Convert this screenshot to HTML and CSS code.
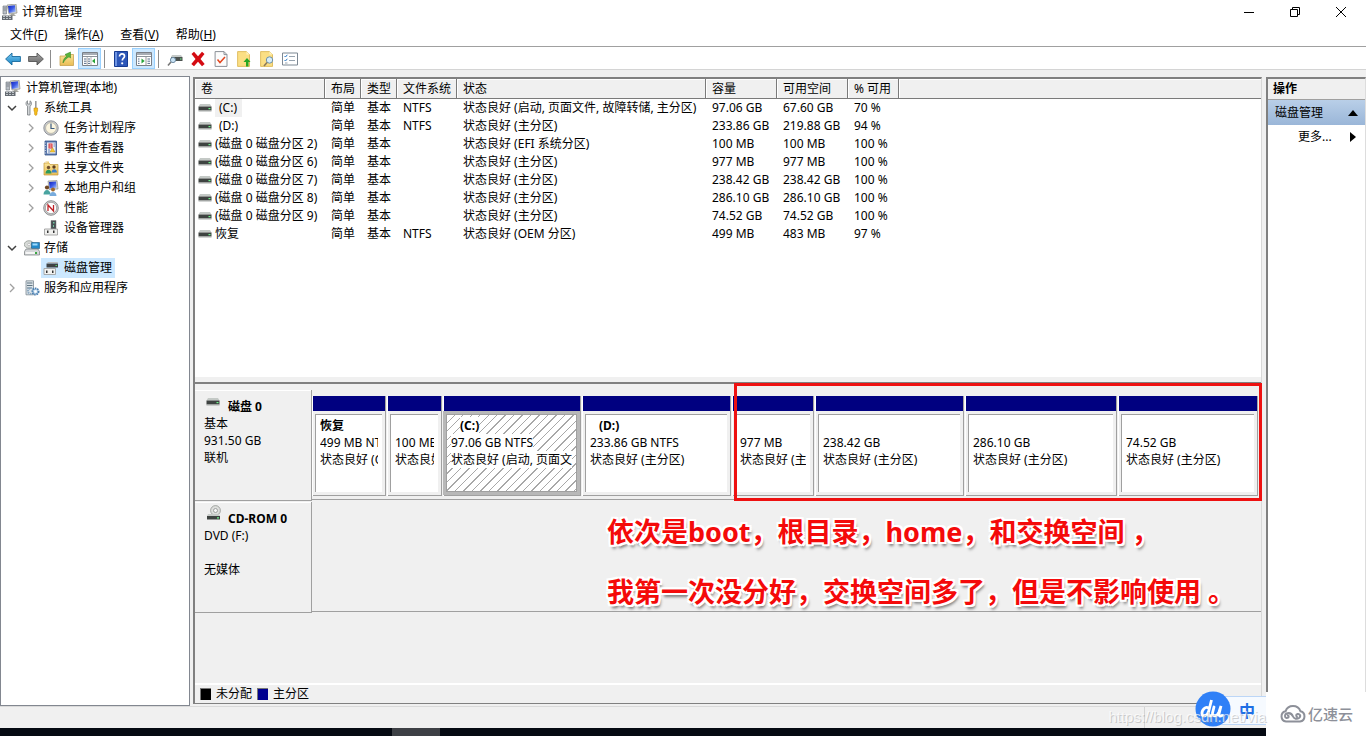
FILE: index.html
```html
<!DOCTYPE html>
<html lang="zh-CN">
<head>
<meta charset="utf-8">
<title>计算机管理</title>
<link rel="stylesheet" href="styles.css">
</head>
<body>
<svg class="defs" aria-hidden="true">
  <defs>
    <linearGradient id="g-blue" x1="0" y1="0" x2="0" y2="1"><stop offset="0" stop-color="#7cc8f0"/><stop offset="1" stop-color="#1583c4"/></linearGradient>
    <linearGradient id="g-gray" x1="0" y1="0" x2="0" y2="1"><stop offset="0" stop-color="#a5a5a5"/><stop offset="1" stop-color="#666"/></linearGradient>
    <linearGradient id="g-screen" x1="0" y1="0" x2="1" y2="1"><stop offset="0" stop-color="#1222b8"/><stop offset=".5" stop-color="#3c5be6"/><stop offset="1" stop-color="#b8d0fa"/></linearGradient>
    <linearGradient id="g-fold" x1="0" y1="0" x2="0" y2="1"><stop offset="0" stop-color="#fbe49a"/><stop offset="1" stop-color="#e9bd55"/></linearGradient>
    <symbol id="i-computer" viewBox="0 0 16 16"><path d="M5 1l9-1 1 9-8 1z" fill="#d8d8cc" stroke="#8c8c88" stroke-width=".7"/><path d="M6 2l7-.8.7 6.8-6.7.9z" fill="url(#g-screen)"/><path d="M1 2h3.500v8H1z" fill="#b9bfc6" stroke="#6d7379" stroke-width=".6"/><path d="M1.500 4h2.500M1.500 6h2.500" stroke="#5a6068" stroke-width=".6"/><path d="M9 10h3l2 2H8z" fill="#a8a8a0"/><path d="M0 11.500h10.500V16H0z" fill="#656b72"/><path d="M1 12.500h8.500M1 14.500h8.500" stroke="#d7dce0" stroke-width=".8" stroke-dasharray="2 1"/></symbol>
    <symbol id="i-tools" viewBox="0 0 16 16"><path d="M3.500.8C1.500 2 1.500 5 3.500 6.200V15h2.500V6.200C8 5 8 2 6 .8V4H3.500z" fill="#d3d6d8" stroke="#777c80" stroke-width=".8"/><path d="M11 1h1.600v8H11z" fill="#9a9a9a"/><path d="M10 8h3.600v3L13 12v2.500l-1.200 1-1.200-1V12L10 11z" fill="#f6be1c" stroke="#c98c06" stroke-width=".6"/></symbol>
    <symbol id="i-clock" viewBox="0 0 16 16"><circle cx="8" cy="8" r="7.200" fill="#c9ccd0" stroke="#7b7e83" stroke-width=".8"/><circle cx="8" cy="8" r="5.400" fill="#fbf5df" stroke="#a5a190" stroke-width=".6"/><path d="M8 3.500V8.500h3.500" fill="none" stroke="#3b5a80" stroke-width="1.200"/></symbol>
    <symbol id="i-event" viewBox="0 0 16 16"><path d="M2 1h11.500v14H2z" fill="#5c79ad" stroke="#36558d" stroke-width=".8"/><path d="M4 2.500h8.500v11H4z" fill="#e8edf5"/><path d="M5.500 3.500h4v5h-4z" fill="#d9363a"/><path d="M6.500 5h2M6.500 7h2" stroke="#fff" stroke-width=".8"/><path d="M9.500 7.500l2.500 4.500H7z" fill="#fbcb32" stroke="#a67c12" stroke-width=".4"/><path d="M5 10h2M5 12h2M10.500 4h1.500M10.500 6h1.500" stroke="#4e71a8" stroke-width=".8"/><path d="M1 3h2M1 5.500h2M1 8h2M1 10.500h2M1 13h2" stroke="#bcc7d8"/></symbol>
    <symbol id="i-shared" viewBox="0 0 16 16"><path d="M1 3h5l1 1.500h8V15H1z" fill="url(#g-fold)" stroke="#c39a3b" stroke-width=".7"/><path d="M2 1.500h4v2" fill="#efcc70"/><circle cx="5.500" cy="7.500" r="1.700" fill="#705030"/><path d="M2.500 13.500c0-5 6-5 6 0z" fill="#2d9a5c"/><circle cx="11" cy="7" r="1.700" fill="#5c3d22"/><path d="M8.500 12.500c0-4.500 5.500-4.500 5.500 0z" fill="#3e81ca"/></symbol>
    <symbol id="i-users" viewBox="0 0 16 16"><path d="M5 1l9-.5 1 8.500-9 .5z" fill="#d2d4cf" stroke="#848684" stroke-width=".6"/><path d="M6 2l7-.4.700 6.200-7 .6z" fill="url(#g-screen)"/><circle cx="4" cy="7.500" r="2.100" fill="#6f4824"/><path d="M.5 14.500c0-6 7-6 7 0z" fill="#49a4a0"/><circle cx="10" cy="9.500" r="2" fill="#a0682b"/><path d="M6.500 16c0-5.500 7-5.500 7 0z" fill="#78abdc"/></symbol>
    <symbol id="i-perf" viewBox="0 0 16 16"><circle cx="8" cy="8" r="7.300" fill="#d0d1d1" stroke="#77797b" stroke-width=".8"/><circle cx="8" cy="8" r="5.700" fill="#fff" stroke="#8e8e8e" stroke-width=".7"/><path d="M5 11V5l5.500 6V5" fill="none" stroke="#bf2227" stroke-width="1.300"/></symbol>
    <symbol id="i-device" viewBox="0 0 16 16"><path d="M8 .5h5V9H8z" fill="#4a5054" stroke="#777" stroke-width=".5"/><path d="M10 2h1.500v1.500H10zM10 5h1v2h-1z" fill="#6fc59e"/><path d="M1.500 9h13v6h-13z" fill="#f0f0ee" stroke="#969696" stroke-width=".8"/><path d="M4 10.500h1.500V13H4zM10 10.500h1.500V13H10z" fill="#333"/></symbol>
    <symbol id="i-storage" viewBox="0 0 16 16"><ellipse cx="5" cy="4.500" rx="4.700" ry="3.800" fill="#d7dad7" stroke="#8a908b" stroke-width=".7"/><circle cx="5" cy="4.500" r="1.300" fill="#fff" stroke="#949494" stroke-width=".5"/><path d="M7.500 2.500h8v6h-8z" fill="#2389c9" stroke="#175780" stroke-width=".6"/><path d="M8.500 3.500h5v2h-5z" fill="#9ddafd"/><path d="M2 9h12l1.500 2.500v3.500H.5v-3.500z" fill="#d5d7d9" stroke="#74787b" stroke-width=".7"/><path d="M1.500 12h11v2h-11z" fill="#f5f5f5"/><path d="M11 12h2v2h-2z" fill="#3aa742"/></symbol>
    <symbol id="i-diskmgmt" viewBox="0 0 16 16"><path d="M3.500 3.500h11.500v4H3.500z" fill="#3f4244"/><path d="M4 3l1-1h9.500l.5 1z" fill="#bbb"/><path d="M12.500 5.500h1.500" stroke="#51d568"/><path d="M1 8.500h11.500v6H1z" fill="#f2f2f0" stroke="#999" stroke-width=".8"/><path d="M3 10.500h1.500V13H3zM9 10.500h1.500V13H9z" fill="#333"/></symbol>
    <symbol id="i-services" viewBox="0 0 16 16"><path d="M2 .8h7.500v14H2z" fill="#dbe3e8" stroke="#7c8992" stroke-width=".8"/><path d="M3 3h5.500M3 5.500h5.500M3 8h4" stroke="#607481"/><circle cx="7" cy="11" r="3" fill="none" stroke="#8ba8c0" stroke-width="2" stroke-dasharray="1.500 .7"/><circle cx="11.500" cy="11.500" r="3" fill="#c9dff1" stroke="#4c80b1" stroke-width="2" stroke-dasharray="1.500 .7"/><circle cx="11.500" cy="11.500" r="1.200" fill="#fff"/></symbol>
    <symbol id="i-drive" viewBox="0 0 14 8"><path d="M2 0h10l1.500 2.500H.5z" fill="#c4c9c6"/><path d="M.5 2.500h13v4H.5z" fill="#3e4341"/><path d="M.5 6.500h13v1H.5z" fill="#a6aaa8"/><path d="M10.500 4h2v1.200h-2z" fill="#6ff58c"/></symbol>
    <symbol id="i-cdrom" viewBox="0 0 16 16"><circle cx="9.500" cy="5.500" r="4.900" fill="#dedfdd" stroke="#929592" stroke-width=".8"/><circle cx="9.500" cy="5.500" r="2" fill="#f8f8f8" stroke="#8e918f" stroke-width=".8"/><path d="M2 9h11l1 2H1z" fill="#c7cac8"/><path d="M1 11h13v3.500H1z" fill="#3e4341"/><path d="M11 12.200h2v1.200h-2z" fill="#6ff58c"/></symbol>
    <symbol id="t-back" viewBox="0 0 16 16"><path d="M.6 8l6.400-6v3.500h8.400v5H7V14z" fill="url(#g-blue)" stroke="#176a9d" stroke-width=".9"/></symbol>
    <symbol id="t-next" viewBox="0 0 16 16"><path d="M15.400 8L9 2v3.500H.6v5H9V14z" fill="url(#g-gray)" stroke="#555" stroke-width=".9"/></symbol>
    <symbol id="t-up" viewBox="0 0 16 16"><path d="M1 5h5l1-1.500h7.500V14.500H1z" fill="url(#g-fold)" stroke="#c19a43" stroke-width=".7"/><path d="M4 12c0-3 1.500-5.500 4-7L6 3.500 11.500 1 11.500 7 10 5.800C7.500 7 5.500 9.500 4 12z" fill="#57b43c" stroke="#2c811e" stroke-width=".5"/></symbol>
    <symbol id="t-tree" viewBox="0 0 16 16"><path d="M.5 1.500h15v13H.5z" fill="#fff" stroke="#7a8088"/><path d="M1 2h14v2H1z" fill="#a7adb5"/><path d="M1 5.500h14" stroke="#8c939b"/><path d="M2 8h2.500M2 10.200h2.500M2 12.400h2.500M6 8h2M6 10.200h2M6 12.400h2" stroke="#586e8b"/><path d="M5.200 6v8.500M9 6v8.500" stroke="#999" stroke-width=".7"/><path d="M13 7.500v5L10 10z" fill="#26a438"/></symbol>
    <symbol id="t-help" viewBox="0 0 14 16"><path d="M.5.5h13v15H.5z" fill="#2c56b8" stroke="#163b92"/><path d="M1 1h2v14H1z" fill="#6d93e1"/><path d="M5.500 5.500c0-3.600 5-3.200 5-.3 0 2-2.200 2-2.200 4.300" fill="none" stroke="#fff" stroke-width="1.700"/><circle cx="8.200" cy="12.300" r="1.100" fill="#fff"/></symbol>
    <symbol id="t-pane" viewBox="0 0 16 16"><path d="M.5 1.500h15v13H.5z" fill="#fff" stroke="#7a8088"/><path d="M1 2h14v2H1z" fill="#a7adb5"/><path d="M1 5.500h14" stroke="#8c939b"/><path d="M2 8h1.500M2 10.200h1.500M2 12.400h1.500M11.500 8h2.500M11.500 10.200h2.500M11.500 12.400h2.500" stroke="#586e8b"/><path d="M10 6v8.500" stroke="#999"/><path d="M5.500 7.500v5l3.200-2.500z" fill="#26a438"/></symbol>
    <symbol id="t-scan" viewBox="0 0 16 16"><path d="M5 4h9l1.500 2H4z" fill="#c5cac8"/><path d="M4 6h11.500v4H4z" fill="#4b514e"/><path d="M13 7.500h1.500v1H13z" fill="#6ff58c"/><circle cx="6" cy="9" r="2.600" fill="#c9e3f5" stroke="#708ca3"/><path d="M4 11l-3 3.500" stroke="#777" stroke-width="1.600"/></symbol>
    <symbol id="t-del" viewBox="0 0 14 16"><path d="M.5 3L3 .8 7 5.200 11 .8 13.500 3 9.500 8l4.200 5-2.700 2.200L7 10.800 3 15.200.3 13 4.500 8z" fill="#d40b12"/></symbol>
    <symbol id="t-check" viewBox="0 0 13 16"><path d="M.6.6h8.900l3 3v11.800H.6z" fill="#fcfcfc" stroke="#8b9097"/><path d="M9.500.6v3h3" fill="none" stroke="#8b9097"/><path d="M3 8.500l2.500 3L10.500 6" fill="none" stroke="#e4461e" stroke-width="1.500"/></symbol>
    <symbol id="t-doc-up" viewBox="0 0 14 16"><path d="M.6.6h8.900l3 3v11.800H.6z" fill="#fbdf84" stroke="#d9b24b" stroke-width=".8"/><path d="M9.500.6v3h3" fill="#fff3c0"/><path d="M9 15.500V11H6.500L10 7l3.500 4H11.500v4.500z" fill="#28a723"/></symbol>
    <symbol id="t-doc-find" viewBox="0 0 14 16"><path d="M.6.6h8.900l3 3v11.800H.6z" fill="#fbdf84" stroke="#d9b24b" stroke-width=".8"/><path d="M9.500.6v3h3" fill="#fff3c0"/><circle cx="9.500" cy="9" r="3.200" fill="#d7edf8" stroke="#6f91a6"/><path d="M7 11.500l-3 3.500" stroke="#8b795a" stroke-width="1.600"/></symbol>
    <symbol id="t-list" viewBox="0 0 16 14"><path d="M.5 1h15v12H.5z" fill="#fff" stroke="#7d8893"/><path d="M2.500 4l1 1 1.800-2.200M2.500 8l1 1 1.800-2.200" fill="none" stroke="#2d7ac6"/><path d="M7 4.500h6M7 8.500h6M3 11h2.500" stroke="#98a4af"/></symbol>
    <symbol id="i-open" viewBox="0 0 10 10"><path d="M1 3l4 4 4-4" fill="none" stroke="#404040" stroke-width="1.500"/></symbol>
    <symbol id="i-closed" viewBox="0 0 10 10"><path d="M3 1l4 4-4 4" fill="none" stroke="#a0a0a0" stroke-width="1.300"/></symbol>
  </defs>
</svg>

<header class="titlebar">
  <svg class="icon"><use href="#i-computer"/></svg>
  <h1 class="title">计算机管理</h1>
  <div class="window-buttons">
    <button aria-label="最小化"><svg viewBox="0 0 12 12"><path d="M1 6.500h10"/></svg></button>
    <button aria-label="还原"><svg viewBox="0 0 12 12"><path d="M1.500 3.500h7v7h-7zM3.500 3.500v-2h7v7h-2"/></svg></button>
    <button aria-label="关闭"><svg viewBox="0 0 12 12"><path d="M1 1l10 10M11 1L1 11"/></svg></button>
  </div>
</header>

<nav class="menubar">
  <button>文件(<u>F</u>)</button>
  <button>操作(<u>A</u>)</button>
  <button>查看(<u>V</u>)</button>
  <button>帮助(<u>H</u>)</button>
</nav>

<div class="toolbar" role="toolbar">
  <button aria-label="后退"><svg><use href="#t-back"/></svg></button>
  <button aria-label="前进"><svg><use href="#t-next"/></svg></button>
  <span class="sep"></span>
  <button aria-label="向上"><svg><use href="#t-up"/></svg></button>
  <button class="pressed" aria-label="显示控制台树"><svg><use href="#t-tree"/></svg></button>
  <span class="sep"></span>
  <button aria-label="帮助"><svg><use href="#t-help"/></svg></button>
  <button class="pressed" aria-label="显示操作窗格"><svg><use href="#t-pane"/></svg></button>
  <span class="sep"></span>
  <button aria-label="重新扫描"><svg><use href="#t-scan"/></svg></button>
  <button aria-label="删除"><svg><use href="#t-del"/></svg></button>
  <button aria-label="属性"><svg><use href="#t-check"/></svg></button>
  <button aria-label="打开"><svg><use href="#t-doc-up"/></svg></button>
  <button aria-label="浏览"><svg><use href="#t-doc-find"/></svg></button>
  <button aria-label="选项"><svg><use href="#t-list"/></svg></button>
</div>

<main class="workspace">
  <nav class="tree">
    <ul>
      <li class="root"><svg class="icon"><use href="#i-computer"/></svg><span>计算机管理(本地)</span></li>
      <li class="l1"><button aria-label="折叠"><svg><use href="#i-open"/></svg></button><svg class="icon"><use href="#i-tools"/></svg><span>系统工具</span></li>
      <li class="l2"><button aria-label="展开"><svg><use href="#i-closed"/></svg></button><svg class="icon"><use href="#i-clock"/></svg><span>任务计划程序</span></li>
      <li class="l2"><button aria-label="展开"><svg><use href="#i-closed"/></svg></button><svg class="icon"><use href="#i-event"/></svg><span>事件查看器</span></li>
      <li class="l2"><button aria-label="展开"><svg><use href="#i-closed"/></svg></button><svg class="icon"><use href="#i-shared"/></svg><span>共享文件夹</span></li>
      <li class="l2"><button aria-label="展开"><svg><use href="#i-closed"/></svg></button><svg class="icon"><use href="#i-users"/></svg><span>本地用户和组</span></li>
      <li class="l2"><button aria-label="展开"><svg><use href="#i-closed"/></svg></button><svg class="icon"><use href="#i-perf"/></svg><span>性能</span></li>
      <li class="l2 leaf"><div class="item"><svg class="icon"><use href="#i-device"/></svg><span>设备管理器</span></div></li>
      <li class="l1"><button aria-label="折叠"><svg><use href="#i-open"/></svg></button><svg class="icon"><use href="#i-storage"/></svg><span>存储</span></li>
      <li class="l2 leaf"><div class="item selected"><svg class="icon"><use href="#i-diskmgmt"/></svg><span>磁盘管理</span></div></li>
      <li class="l1"><button aria-label="展开"><svg><use href="#i-closed"/></svg></button><svg class="icon"><use href="#i-services"/></svg><span>服务和应用程序</span></li>
    </ul>
  </nav>

  <section class="center">
    <div class="volumes">
      <table>
        <colgroup><col class="c-vol"><col class="c-short"><col class="c-short"><col class="c-fs"><col class="c-state"><col class="c-size"><col class="c-size"><col class="c-pct"><col></colgroup>
        <thead><tr><th>卷</th><th>布局</th><th>类型</th><th>文件系统</th><th>状态</th><th>容量</th><th>可用空间</th><th>% 可用</th><th></th></tr></thead>
        <tbody>
          <tr><td class="vol"><svg class="drive"><use href="#i-drive"/></svg><span class="letter focus">(C:)</span></td><td>简单</td><td>基本</td><td>NTFS</td><td>状态良好 (启动, 页面文件, 故障转储, 主分区)</td><td>97.06 GB</td><td>67.60 GB</td><td>70 %</td><td></td></tr>
          <tr><td class="vol"><svg class="drive"><use href="#i-drive"/></svg><span class="letter">(D:)</span></td><td>简单</td><td>基本</td><td>NTFS</td><td>状态良好 (主分区)</td><td>233.86 GB</td><td>219.88 GB</td><td>94 %</td><td></td></tr>
          <tr><td class="vol"><svg class="drive"><use href="#i-drive"/></svg>(磁盘 0 磁盘分区 2)</td><td>简单</td><td>基本</td><td></td><td>状态良好 (EFI 系统分区)</td><td>100 MB</td><td>100 MB</td><td>100 %</td><td></td></tr>
          <tr><td class="vol"><svg class="drive"><use href="#i-drive"/></svg>(磁盘 0 磁盘分区 6)</td><td>简单</td><td>基本</td><td></td><td>状态良好 (主分区)</td><td>977 MB</td><td>977 MB</td><td>100 %</td><td></td></tr>
          <tr><td class="vol"><svg class="drive"><use href="#i-drive"/></svg>(磁盘 0 磁盘分区 7)</td><td>简单</td><td>基本</td><td></td><td>状态良好 (主分区)</td><td>238.42 GB</td><td>238.42 GB</td><td>100 %</td><td></td></tr>
          <tr><td class="vol"><svg class="drive"><use href="#i-drive"/></svg>(磁盘 0 磁盘分区 8)</td><td>简单</td><td>基本</td><td></td><td>状态良好 (主分区)</td><td>286.10 GB</td><td>286.10 GB</td><td>100 %</td><td></td></tr>
          <tr><td class="vol"><svg class="drive"><use href="#i-drive"/></svg>(磁盘 0 磁盘分区 9)</td><td>简单</td><td>基本</td><td></td><td>状态良好 (主分区)</td><td>74.52 GB</td><td>74.52 GB</td><td>100 %</td><td></td></tr>
          <tr><td class="vol"><svg class="drive"><use href="#i-drive"/></svg>恢复</td><td>简单</td><td>基本</td><td>NTFS</td><td>状态良好 (OEM 分区)</td><td>499 MB</td><td>483 MB</td><td>97 %</td><td></td></tr>
        </tbody>
      </table>
    </div>
    <div class="splitter"></div>
    <div class="disks">
      <div class="disk">
        <div class="disk-label">
          <div class="disk-name"><svg class="drive"><use href="#i-drive"/></svg><b>磁盘 0</b></div>
          <p>基本</p><p>931.50 GB</p><p>联机</p>
        </div>
        <div class="disk-body">
          <div class="partitions">
            <div class="partition" style="flex-grow:67"><div class="box"><b>恢复</b><p>499 MB NTFS</p><p>状态良好 (OEM 分区)</p></div></div>
            <div class="partition" style="flex-grow:48"><div class="box"><b></b><p>100 MB</p><p>状态良好 (EFI 系统分区)</p></div></div>
            <div class="partition current" style="flex-grow:131"><div class="box"><b class="letter"><span>(C:)</span></b><p><span>97.06 GB NTFS</span></p><p><span>状态良好 (启动, 页面文件, 故障转储, 主分区)</span></p></div></div>
            <div class="partition" style="flex-grow:142"><div class="box"><b class="letter">(D:)</b><p>233.86 GB NTFS</p><p>状态良好 (主分区)</p></div></div>
            <div class="partition" style="flex-grow:75"><div class="box"><b></b><p>977 MB</p><p>状态良好 (主分区)</p></div></div>
            <div class="partition" style="flex-grow:142"><div class="box"><b></b><p>238.42 GB</p><p>状态良好 (主分区)</p></div></div>
            <div class="partition" style="flex-grow:145"><div class="box"><b></b><p>286.10 GB</p><p>状态良好 (主分区)</p></div></div>
            <div class="partition" style="flex-grow:133"><div class="box"><b></b><p>74.52 GB</p><p>状态良好 (主分区)</p></div></div>
            <div class="mark"></div>
          </div>
        </div>
      </div>
      <div class="disk">
        <div class="disk-label">
          <div class="disk-name"><svg class="cdrom"><use href="#i-cdrom"/></svg><b>CD-ROM 0</b></div>
          <p>DVD (F:)</p><p></p><p>无媒体</p>
        </div>
        <div class="disk-body">
          <div class="note"><p>依次是boot，根目录，home，和交换空间 ，</p><p>我第一次没分好，交换空间多了，但是不影响使用 。</p></div>
        </div>
      </div>
    </div>
    <div class="legend">
      <span class="swatch free"></span><span>未分配</span>
      <span class="swatch primary"></span><span>主分区</span>
    </div>
  </section>

  <aside class="actions">
    <h2>操作</h2>
    <button class="group">磁盘管理<svg viewBox="0 0 10 6"><path d="M0 6l5-6 5 6z"/></svg></button>
    <button class="more">更多...<svg class="right" viewBox="0 0 6 10"><path d="M0 0l6 5-6 5z"/></svg></button>
  </aside>
</main>

<footer class="statusbar"><span class="status-cell"></span></footer>
<div class="taskbar"><span class="task"></span></div>

<div class="brand">
  <svg viewBox="0 0 26 18"><path d="M6 16.500h14a5.200 5.200 0 0 0 .5-10.200A8 8 0 0 0 5.500 6.300 5.200 5.200 0 0 0 6 16.500zM6.500 8.500c3-1 5.500.5 6.500 3s4 3 6 1.500c2.500-2 .5-4.500-1.500-4s-1.500 3 .3 3M6.500 8.500c-2 1-2 4 0 4.500 2.500.5 3-3 .5-2.500"/></svg>
  <span>亿速云</span>
</div>
<div class="ime">
  <span class="mode">中</span>
  <svg viewBox="0 0 36 36"><circle cx="18" cy="18" r="17.500" fill="#2f80f7"/><path d="M13.500 17c-3-2-7 2-6.500 6 .5 3.500 5 2 6.500-2l3-12-3 12c-.5 4 1 4.500 3 3.500M19 16l-1.500 6c-.5 4 4.500 4 6.500-1l2-6-2 8c0 2 1 2.500 3 1.500" fill="none" stroke="#fff" stroke-width="2.800" stroke-linecap="round"/></svg>
</div>
<div class="watermark">https://blog.csdn.net/via</div>
</body>
</html>
```

FILE: styles.css
```css
* { box-sizing: border-box; }

body {
  margin: 0;
  height: 100vh;
  display: flex;
  flex-direction: column;
  position: relative;
  overflow: hidden;
  background: #f0f0f0;
  color: #000;
  font: 12px/18px "Noto Sans", "Noto Sans CJK SC", sans-serif;
}

button {
  border: 0;
  padding: 0;
  background: none;
  color: inherit;
  font: inherit;
}

h1, h2, p, ul { margin: 0; padding: 0; }
ul { list-style: none; }
.defs { position: absolute; width: 0; height: 0; }
.icon { width: 16px; height: 16px; flex: none; }

.titlebar {
  height: 23px;
  flex: none;
  display: flex;
  align-items: center;
  gap: 4px;
  padding: 0 2px;
  background: #fff;
}
.title { font-size: 12px; font-weight: 400; }
.window-buttons { display: flex; margin-left: auto; }
.window-buttons button { width: 46px; height: 22px; display: grid; place-items: center; }
.window-buttons button svg { width: 12px; height: 12px; fill: none; stroke: #000; }

.menubar {
  height: 24px;
  flex: none;
  display: flex;
  align-items: center;
  gap: 17px;
  padding-left: 10px;
  background: #fff;
  border-bottom: 1px solid #a0a0a0;
}

.toolbar {
  height: 23px;
  flex: none;
  display: flex;
  align-items: center;
  padding: 1px 0 0 1px;
  background: #fff;
  border-bottom: 1px solid #d4d4d4;
}
.toolbar button { width: 23px; height: 21px; display: grid; place-items: center; }
.toolbar svg { width: 16px; height: 16px; }
.toolbar .pressed { background: #cce8ff; border: 1px solid #99d1ff; }
.toolbar .sep { width: 1px; height: 18px; margin: 0 4px 0 3px; background: #8d8d8d; }

.workspace { flex: 1; min-height: 0; display: flex; padding-top: 6px; }

.tree {
  width: 190px;
  flex: none;
  background: #fff;
  border: 1px solid #828790;
}
.tree ul { padding-top: 1px; }
.tree li { display: flex; align-items: center; height: 20px; white-space: nowrap; }
.tree li.root { padding-left: 4px; gap: 5px; }
.tree li.l1 { padding-left: 6px; gap: 4px; }
.tree li.l2 { padding-left: 25px; gap: 5px; }
.tree li.leaf { padding-left: 40px; }
.tree .item { display: flex; align-items: center; gap: 5px; height: 20px; padding: 0 3px 0 2px; }
.tree .selected { background: #cce8ff; }
.tree button { width: 10px; height: 10px; margin-right: 2px; display: grid; flex: none; }
.tree li.l1 button { margin-right: 3px; }
.tree button svg { width: 10px; height: 10px; }

.center {
  flex: 1;
  min-width: 0;
  display: flex;
  flex-direction: column;
  margin: 1px 4px 2px 3px;
  border: solid #808080;
  border-width: 2px 1px 1px 2px;
  border-right-color: #d8d8d8;
}
.volumes { flex: 298 1 0; min-height: 0; background: #fff; overflow: hidden; }
.volumes table { width: 100%; table-layout: fixed; border-collapse: separate; border-spacing: 0; }
.c-vol { width: 130px; }
.c-short { width: 36px; }
.c-fs { width: 60px; }
.c-state { width: 249px; }
.c-size { width: 71px; }
.c-pct { width: 51px; }
.volumes th {
  height: 20px;
  padding: 0 0 0 6px;
  background: #f0f0f0;
  border: solid #7a7a7a;
  border-width: 0 1px 1px 0;
  box-shadow: inset 1px 1px #fff;
  font-weight: 400;
  text-align: left;
  white-space: nowrap;
}
.volumes th:last-child { border-right: 0; }
.volumes td { height: 18px; padding: 0 0 0 6px; line-height: 18px; white-space: nowrap; }
.volumes td.vol { padding-left: 3px; }
.drive { width: 14px; height: 8px; }
.vol .drive { margin-right: 3px; }
.letter { display: inline-block; padding: 0 5px 0 4px; }
.focus { background: #f0f0f0; }

.splitter { height: 8px; flex: none; border-top: 1px solid #fff; border-bottom: 2px solid #808080; }

.disks { flex: 294 1 0; min-height: 0; padding-top: 6px; }
.disk { display: flex; height: 112px; }
.disk-label {
  width: 117px;
  flex: none;
  height: 111px;
  padding: 8px 9px;
  border: solid #a0a0a0;
  border-width: 0 1px 1px 0;
  box-shadow: inset 0 1px #fff;
}
.disk-label p, .partition p, .partition b { display: block; height: 17px; line-height: 17px; white-space: nowrap; }
.disk-name { display: flex; height: 17px; gap: 8px; padding-left: 2px; line-height: 17px; white-space: nowrap; }
.disk-name .cdrom { width: 16px; height: 16px; margin: -5px -2px 0 0; flex: none; }
.disk-body {
  flex: 1;
  min-width: 0;
  height: 110px;
  position: relative;
  padding: 6px 4px 3px 1px;
  border-bottom: 1px solid #a0a0a0;
}
.partitions { display: flex; gap: 3px; height: 100%; position: relative; }
.partition {
  flex: 1 1 0;
  min-width: 0;
  padding: 18px 3px 3px 2px;
  background: linear-gradient(#000080, #000080) top / 100% 15px no-repeat;
  border-bottom: 1px solid #a0a0a0;
  box-shadow: 1px 0 #a0a0a0, -1px 0 #fff;
}
.box {
  height: 100%;
  padding: 2px 4px;
  overflow: hidden;
  background: #fff;
  border: solid #a0a0a0;
  border-width: 1px 0 0 1px;
}
.box p { overflow: hidden; }
.partition b.letter { padding-left: 9px; }
.current .box {
  background: repeating-linear-gradient(135deg, #fff 0, #fff 5px, #a8a8a8 5px, #a8a8a8 6px);
  border-width: 1px;
  outline: 3px solid #b8b8b8;
}
.current .box span { background: #fff; }

.mark {
  position: absolute;
  top: -13px;
  bottom: -5px;
  left: 44.600%;
  right: -5px;
  border: 3px solid #ee1111;
}
.note {
  position: absolute;
  top: 0;
  left: 295px;
  color: #f40a0a;
  font-size: 27px;
  font-weight: 700;
  line-height: 60px;
  white-space: nowrap;
  text-shadow: 2px 0 #fff, -2px 0 #fff, 0 2px #fff, 0 -2px #fff, 2px 2px #fff, -2px -2px #fff, 2px -2px #fff, -2px 2px #fff, 2px 4px 3px #777;
}

.legend {
  height: 20px;
  flex: none;
  display: flex;
  align-items: center;
  gap: 5px;
  padding-left: 5px;
  border-top: 2px solid #fff;
}
.swatch { width: 11px; height: 12px; border: 1px solid #777; border-width: 1px 0 0 1px; }
.free { background: #000; }
.primary { background: #000090; }

.actions {
  width: 100px;
  flex: none;
  margin: 1px 0 2px;
  background: #fff;
  border: solid #808080;
  border-width: 2px 1px 0 2px;
  border-right-color: #ddd;
}
.actions h2 {
  height: 21px;
  padding-left: 5px;
  background: #f0f0f0;
  border-bottom: 1px solid #a0a0a0;
  font-size: 12px;
  line-height: 19px;
}
.actions button { display: flex; align-items: center; width: 100%; height: 24px; }
.actions .group {
  height: 25px;
  padding: 0 7px;
  justify-content: space-between;
  background: linear-gradient(#b9cfe8, #9ab6d8);
}
.actions .more { padding: 0 9px 0 30px; justify-content: space-between; }
.actions svg { width: 10px; height: 6px; }
.actions svg.right { width: 6px; height: 10px; }

.statusbar { height: 22px; flex: none; display: flex; border-top: 1px solid #dadada; }
.status-cell { width: 1145px; border-right: 1px solid #d4d4d4; }
.taskbar { height: 8px; flex: none; background: #050a12; padding-left: 392px; }
.task { display: block; width: 48px; height: 8px; background: #3d4045; }

.brand {
  position: absolute;
  right: 0;
  bottom: 0;
  width: 100px;
  height: 44px;
  display: flex;
  align-items: center;
  gap: 2px;
  padding-left: 14px;
  background: #fff;
  color: #8d9099;
  font-size: 15px;
  font-weight: 500;
}
.brand svg { width: 26px; height: 18px; fill: none; stroke: #8d9099; stroke-width: 2; }

.ime { position: absolute; right: 100px; bottom: 9px; width: 71px; height: 36px; }
.ime svg { position: absolute; left: 0; top: 0; width: 36px; height: 36px; }
.mode {
  position: absolute;
  inset: 5px 0 2px 18px;
  padding-left: 26px;
  background: #f6faff;
  border: solid #bcd6f7;
  border-width: 1px 0;
  color: #1f6fe5;
  font-size: 16px;
  font-weight: 700;
  line-height: 28px;
}
.watermark {
  position: absolute;
  right: 100px;
  bottom: 9px;
  color: rgba(255, 255, 255, .7);
  text-shadow: 1px 1px rgba(140, 140, 140, .4);
  font: 15px/20px "Liberation Sans", sans-serif;
}
```
